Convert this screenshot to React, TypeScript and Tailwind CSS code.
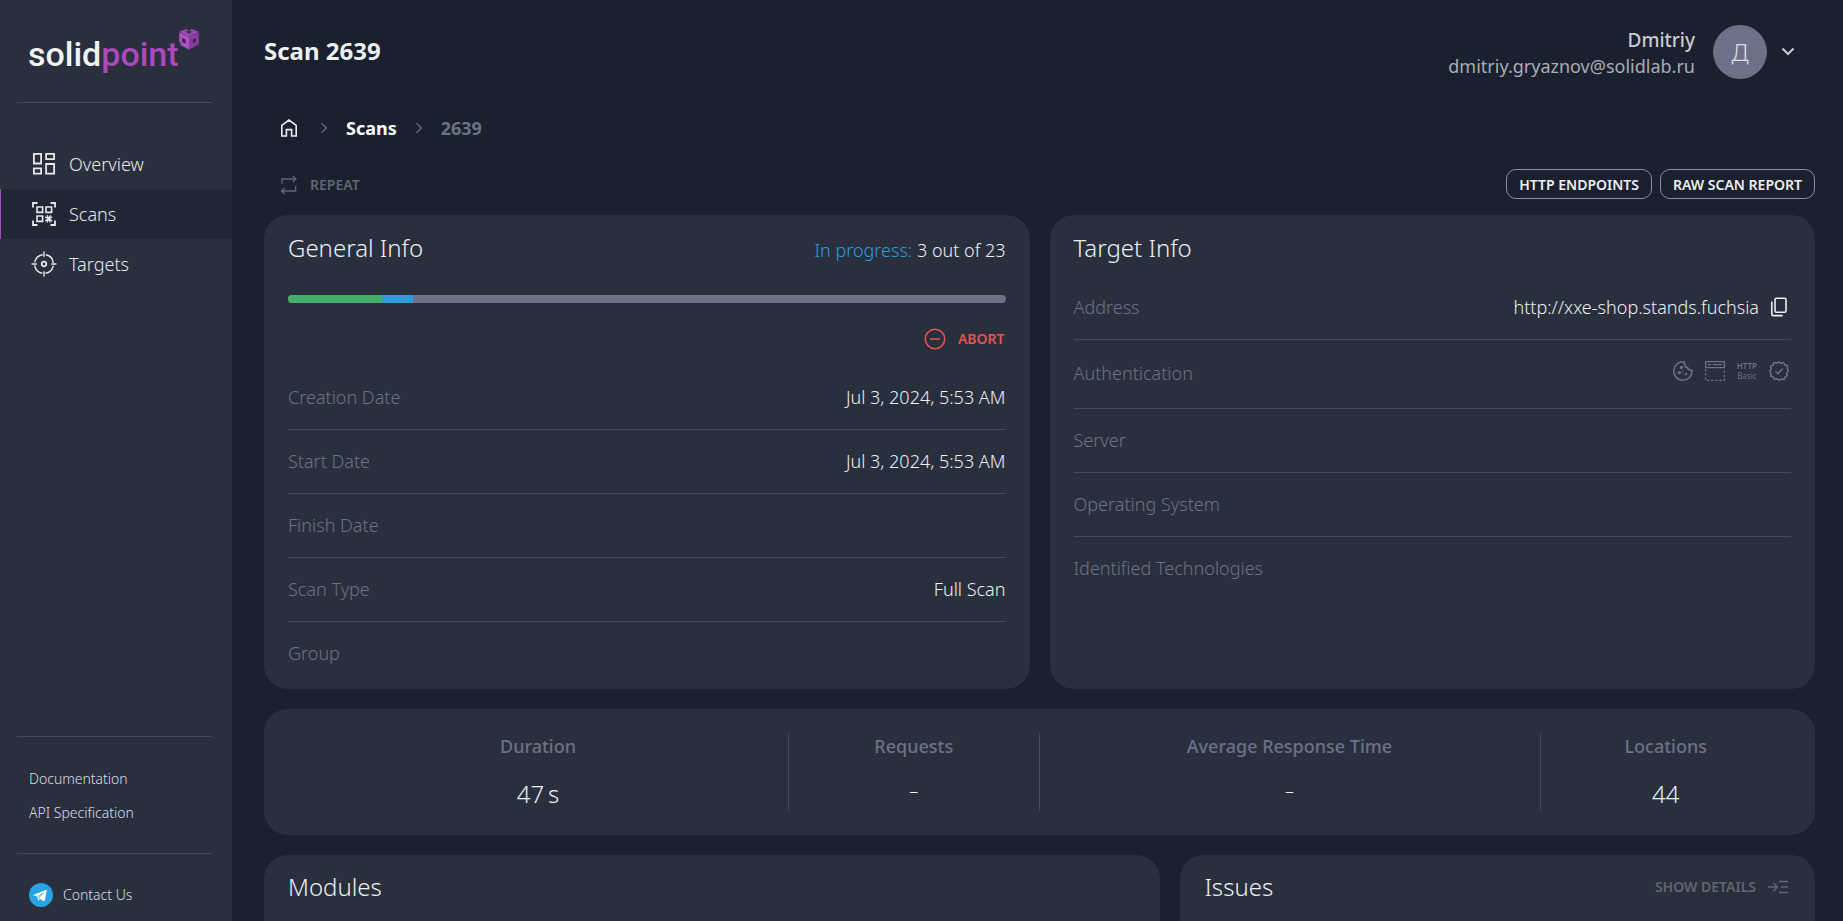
import React from "react";

const NAV_ITEMS = [
  { label: "Overview", icon: OverviewIcon, active: false },
  { label: "Scans", icon: ScansIcon, active: true },
  { label: "Targets", icon: TargetsIcon, active: false },
];

const GENERAL_ROWS = [
  { label: "Creation Date", value: "Jul 3, 2024, 5:53 AM" },
  { label: "Start Date", value: "Jul 3, 2024, 5:53 AM" },
  { label: "Finish Date", value: "" },
  { label: "Scan Type", value: "Full Scan" },
  { label: "Group", value: "" },
];

const STATS = [
  { label: "Duration", value: "47\u2009s" },
  { label: "Requests" },
  { label: "Average Response Time" },
  { label: "Locations", value: "44" },
];

// modules of the scan, by state
const PROGRESS = { total: 23, done: 3, running: 1 };

function OverviewIcon() {
  return (
    <svg width="26" height="26" viewBox="0 0 26 26" fill="none" stroke="currentColor" strokeWidth="1.8">
      <path d="M2.9 2.9h7.2v9.6H2.9zM15.1 2.9h8v5.2h-8zM2.9 17.4h7.2v5.2H2.9zM15.1 13h8v9.6h-8z" />
    </svg>
  );
}

function ScansIcon() {
  return (
    <svg width="26" height="26" viewBox="0 0 26 26" fill="none" stroke="currentColor" strokeWidth="1.8">
      <path d="M2 6.5V2h4.5M19.5 2H24v4.5M24 19.5V24h-4.5M6.5 24H2v-4.5" />
      <path strokeWidth="1.6" d="M6 6h5.6v5.4H6zM15 6h5.6v5.4H15zM6 15h5.6v5.4H6z" />
      <path strokeWidth="1.3" d="M14.2 15.9l7 4M21.2 15.9l-7 4M16 14.2l3.4 7.4M19.4 14.2L16 21.6" />
    </svg>
  );
}

function TargetsIcon() {
  return (
    <svg width="26" height="26" viewBox="0 0 26 26" fill="none" stroke="currentColor" strokeWidth="1.4">
      <circle cx="13" cy="13" r="9.4" strokeDasharray="11.6 3.16" strokeDashoffset="-1.6" />
      <circle cx="13" cy="13" r="2.3" strokeWidth="1.7" />
      <path d="M13 .5v5.3M13 20.2v5.3M.5 13h5.3M20.2 13h5.3" />
    </svg>
  );
}

function LogoCube() {
  return (
    <svg width="20" height="22" viewBox="0 0 20 22">
      <path fill="#9c46b3" d="M10 0l9.8 3.8L10 9 .2 3.8z" />
      <path fill="#b04fc6" d="M.2 4.2L10 9v12.4L.2 16.4z" />
      <path fill="#8a3a9f" d="M19.8 4.2L10 9v12.4l9.8-5z" />
      <path fill="#2a2f3d" d="M7.6 0h4.8v1.4l-2.4.8-2.4-.8zM6.2 3.4h2.4v-1h2.8v1h2.4L10 5.8zM3.2 10l3.4 1.6v4l-3.4-1.6zM16.8 10L14 11.4v4l2.800-1.400zM0 13.600l1.600.8v2.800L0 16.400z" />
    </svg>
  );
}

function TelegramIcon() {
  return (
    <svg width="24" height="24" viewBox="0 0 24 24">
      <circle cx="12" cy="12" r="12" fill="#28a3e3" />
      <path fill="#fff" d="M4.8 11.8l12-4.7c.6-.2 1.1.1.9 1l-2 9.6c-.2.7-.6.8-1.1.5l-3.1-2.3-1.5 1.4c-.4.4-.8.3-.9-.3l-1-3.5-3.2-1c-.7-.2-.7-.5-.1-.7z" />
      <path stroke="#28a3e3" strokeWidth=".7" d="M8.4 13.8l6.4-4.2-4.4 4.4-.2 2.6" fill="none" />
    </svg>
  );
}

function HomeIcon() {
  return (
    <svg width="18" height="18" viewBox="0 0 18 18" fill="none" stroke="currentColor" strokeWidth="1.6">
      <path d="M1.8 17V6.4L9 1l7.2 5.4V17h-4.6v-6.4H6.4V17z" />
    </svg>
  );
}

function CrumbArrow() {
  return (
    <svg width="8" height="12" viewBox="0 0 8 12" fill="none" stroke="#6d7187" strokeWidth="1.2">
      <path d="M1.5 1.2L6.3 6l-4.8 4.8" />
    </svg>
  );
}

function RepeatIcon() {
  return (
    <svg width="18" height="20" viewBox="0 0 18 20" fill="none" stroke="currentColor" strokeWidth="1.3">
      <path d="M2 9V4h14M12.8 1l3.2 3-3.2 3M15.6 11v5H1.4M4.8 13l-3.4 3 3.4 3" />
    </svg>
  );
}

function AbortIcon() {
  return (
    <svg width="22" height="22" viewBox="0 0 22 22" fill="none" stroke="currentColor" strokeWidth="1.5">
      <circle cx="11" cy="11" r="9.7" />
      <path d="M6 11h10" />
    </svg>
  );
}

function CopyIcon() {
  return (
    <svg width="18" height="20" viewBox="0 0 18 20" fill="none" stroke="currentColor" strokeWidth="1.6">
      <rect x="5" y="1.2" width="11" height="14" rx="1.4" />
      <path d="M1.8 4.6v12.6c0 .9.6 1.4 1.4 1.4h9.4" />
    </svg>
  );
}

function CookieIcon() {
  return (
    <svg width="20" height="20" viewBox="0 0 20 20" fill="none" stroke="currentColor" strokeWidth="1.5">
      <path d="M11.2.9A9.2 9.2 0 1 0 19.1 9.6c-1.2.3-2-.2-2.2-1.2-1.3.4-2.6-.4-2.3-1.9-2 .1-2.9-1-2.2-2.5-1.3-.4-1.7-1.7-1.2-3.1z" />
      <g fill="currentColor" stroke="none">
        <circle cx="8.6" cy="6.4" r="1.6" />
        <circle cx="6.4" cy="11.6" r="1.7" />
        <circle cx="13" cy="13" r="1.2" />
        <circle cx="10" cy="10" r=".6" />
      </g>
    </svg>
  );
}

function FormIcon() {
  return (
    <svg width="20" height="20" viewBox="0 0 20 20" fill="none" stroke="currentColor" strokeWidth="1.2">
      <path d="M.6.6h18.8v6H.6zM3 3.6h3M8 3.6h9" />
      <path strokeDasharray="2.4 1.8" d="M.6 8v11.4h18.8V8" />
    </svg>
  );
}

function BadgeCheckIcon() {
  return (
    <svg width="20" height="20" viewBox="0 0 20 20" fill="none" stroke="currentColor" strokeWidth="1.5" strokeLinejoin="round">
      <path d="M10 .8l2.1 1.6 2.5-.9 1.2 2.5 2.6.5-.1 2.7L19.3 10l-1.7 2.1.7 2.6-2.4 1.2-.8 2.6-2.7-.4L10 19.2l-2.2-1.5-2.6.7-1-2.5-2.6-.9.4-2.7L.8 10l1.5-2.2-.7-2.6 2.5-1 .9-2.6 2.7.4z" />
      <path d="M6.4 10.2l2.6 2.5 4.6-5.1" />
    </svg>
  );
}

function DetailsIcon() {
  return (
    <svg width="20" height="14" viewBox="0 0 20 14" fill="none" stroke="currentColor" strokeWidth="1.5">
      <path d="M0 7h9M5.2 2.8L9.3 7l-4.1 4.2M11 1.4h9M13 7h7M11 12.6h9" />
    </svg>
  );
}

function Sidebar() {
  return (
    <aside className="flex w-[232px] shrink-0 flex-col bg-[#2a2f3d]">
      <a href="#" className="flex h-[102px] items-start px-7 pt-7">
        <span className="pt-[3px] font-['Roboto',sans-serif] text-[34px] leading-[46px] font-medium text-[#f2f2f4]">
          solid<span className="text-[#ad48bd]">point</span>
        </span>
        <LogoCube />
      </a>
      <hr className="mr-5 ml-[17px] border-[#454a5f]" />

      <nav className="mt-9 flex-1">
        {NAV_ITEMS.map(({ label, icon: Icon, active }) => (
          <a
            key={label}
            href="#"
            className={`flex h-[50px] items-center gap-3 border-l pl-[30px] text-lg font-light text-[#e6e8ec] ${
              active ? "border-[#ad48bd] bg-[#212735]" : "border-transparent"
            }`}
          >
            <Icon />
            {label}
          </a>
        ))}
      </nav>

      <hr className="mr-5 ml-[17px] border-[#454a5f]" />
      <div className="flex flex-col gap-3 px-[29px] pt-[31px] pb-[29px] text-sm leading-[22px] font-light text-[#dcdee4]">
        <a href="#">Documentation</a>
        <a href="#">API Specification</a>
      </div>
      <hr className="mr-5 ml-[17px] border-[#454a5f]" />
      <a href="#" className="flex items-center gap-[10px] px-[29px] pt-[29px] pb-[14px] text-sm font-light text-[#dcdee4]">
        <TelegramIcon />
        Contact Us
      </a>
    </aside>
  );
}

function Card({ className = "", children }: { className?: string; children?: React.ReactNode }) {
  return <section className={`rounded-3xl bg-[#2a2f3d] px-6 ${className}`}>{children}</section>;
}

function InfoRow({ label, className = "h-16", children }: { label: string; className?: string; children?: React.ReactNode }) {
  return (
    <div className={`flex items-center justify-between border-b border-[#454a5f] pb-[2px] text-lg font-light last:border-b-0 ${className}`}>
      <dt className="text-[#6d7187]">{label}</dt>
      <dd className="text-[#eceef2]">{children}</dd>
    </div>
  );
}

function GeneralInfo() {
  const { total, done, running } = PROGRESS;

  return (
    <Card>
      <div className="flex h-20 items-start justify-between pt-[15px]">
        <h2 className="text-2xl leading-9 font-light">General Info</h2>
        <p className="text-lg leading-10 font-light">
          <span className="text-[#2d9cdb]">In progress:</span> {done} out of {total}
        </p>
      </div>
      <div className="flex h-2 overflow-hidden rounded-full bg-[#6d7187]">
        <div className="bg-[#44ad6e]" style={{ width: `${(done / total) * 100}%` }} />
        <div className="bg-[#2d9cdb]" style={{ width: `${(running / total) * 100}%` }} />
      </div>
      <div className="flex h-[63px] items-center justify-end pt-2 pr-px">
        <button type="button" className="flex items-center gap-3 text-sm font-semibold text-[#e55353]">
          <AbortIcon />
          ABORT
        </button>
      </div>
      <dl className="pb-[3px]">
        {GENERAL_ROWS.map(({ label, value }) => (
          <InfoRow key={label} label={label}>{value}</InfoRow>
        ))}
      </dl>
    </Card>
  );
}

function TargetInfo() {
  return (
    <Card>
      <h2 className="h-[61px] pt-[15px] text-2xl leading-9 font-light">Target Info</h2>
      <dl>
        <InfoRow label="Address">
          <span className="flex items-center gap-[11px]">
            http://xxe-shop.stands.fuchsia
            <button type="button" aria-label="Copy address" className="mr-[3px]"><CopyIcon /></button>
          </span>
        </InfoRow>
        <InfoRow label="Authentication" className="h-[69px]">
          <span className="flex items-center gap-3 pr-[2px] pb-1 text-[#6d7187]">
            <CookieIcon />
            <FormIcon />
            <span className="text-center text-[8px] leading-[10px] font-normal">
              <span className="block font-semibold">HTTP</span>
              <span className="block">Basic</span>
            </span>
            <BadgeCheckIcon />
          </span>
        </InfoRow>
        <InfoRow label="Server" />
        <InfoRow label="Operating System" />
        <InfoRow label="Identified Technologies" />
      </dl>
    </Card>
  );
}

export default function App() {
  return (
    <div className="flex h-screen overflow-hidden bg-[#1a202d] font-['Noto_Sans',sans-serif] text-[#eceef2]">
      <Sidebar />

      <main className="min-w-0 flex-1 overflow-hidden pr-7 pl-8">
        <header className="flex h-[104px] items-center justify-between">
          <h1 className="pb-[2px] text-2xl font-bold">Scan 2639</h1>
          <button type="button" className="flex items-center gap-[14px] pr-5">
            <span className="pt-[2px] pr-1 text-right text-lg leading-[26px] text-[#a9adb8]">
              <span className="block text-[19px] font-medium text-[#c9ccd4]">Dmitriy</span>
              <span className="block">dmitriy.gryaznov@solidlab.ru</span>
            </span>
            <span className="flex size-[54px] items-center justify-center rounded-full bg-[#6d7187] text-2xl font-light text-[#dcdee4]">Д</span>
            <svg width="14" height="10" viewBox="0 0 14 10" fill="none" stroke="#c9ccd4" strokeWidth="2">
              <path d="M1.5 1.5L7 7l5.5-5.5" />
            </svg>
          </button>
        </header>

        <nav aria-label="Breadcrumb" className="flex h-12 items-center gap-[18px] pl-4 text-lg font-bold">
          <a href="#" aria-label="Home" className="mr-1"><HomeIcon /></a>
          <CrumbArrow />
          <a href="#" className="text-white">Scans</a>
          <CrumbArrow />
          <span className="text-[#6d7187]">2639</span>
        </nav>

        <div className="flex h-[63px] items-center justify-between text-sm font-semibold">
          <button type="button" disabled className="flex items-center gap-3 pt-[2px] pl-4 text-[#626671]">
            <RepeatIcon />
            REPEAT
          </button>
          <div className="flex gap-2">
            <button type="button" className="h-[30px] rounded-[10px] border border-[#8a8f9b] px-3 pt-[2px]">HTTP ENDPOINTS</button>
            <button type="button" className="h-[30px] rounded-[10px] border border-[#8a8f9b] px-3 pt-[2px]">RAW SCAN REPORT</button>
          </div>
        </div>

        <div className="grid grid-cols-12 gap-5">
          <div className="col-span-6 grid"><GeneralInfo /></div>
          <div className="col-span-6 grid"><TargetInfo /></div>

          <Card className="col-span-12 grid grid-cols-[2fr_1fr_2fr_1fr] py-6 text-center">
            {STATS.map(({ label, value }) => (
              <div key={label} className="h-[78px] border-r border-[#454a5f] last:border-r-0">
                <p className="mb-[17px] text-lg leading-[26px] font-medium text-[#6d7187]">{label}</p>
                {value ? (
                  <p className="text-2xl leading-9 font-light">{value}</p>
                ) : (
                  <p className="text-lg leading-7 font-light">–</p>
                )}
              </div>
            ))}
          </Card>

          <Card className="col-span-7 h-96 pt-[14px]">
            <h2 className="text-2xl leading-9 font-light">Modules</h2>
          </Card>
          <Card className="col-span-5 h-96 pt-[14px]">
            <div className="flex items-center justify-between pr-[3px]">
              <h2 className="text-2xl leading-9 font-light">Issues</h2>
              <button type="button" disabled className="flex items-center gap-3 text-sm font-semibold text-[#626671]">
                SHOW DETAILS
                <DetailsIcon />
              </button>
            </div>
          </Card>
        </div>
      </main>
    </div>
  );
}
